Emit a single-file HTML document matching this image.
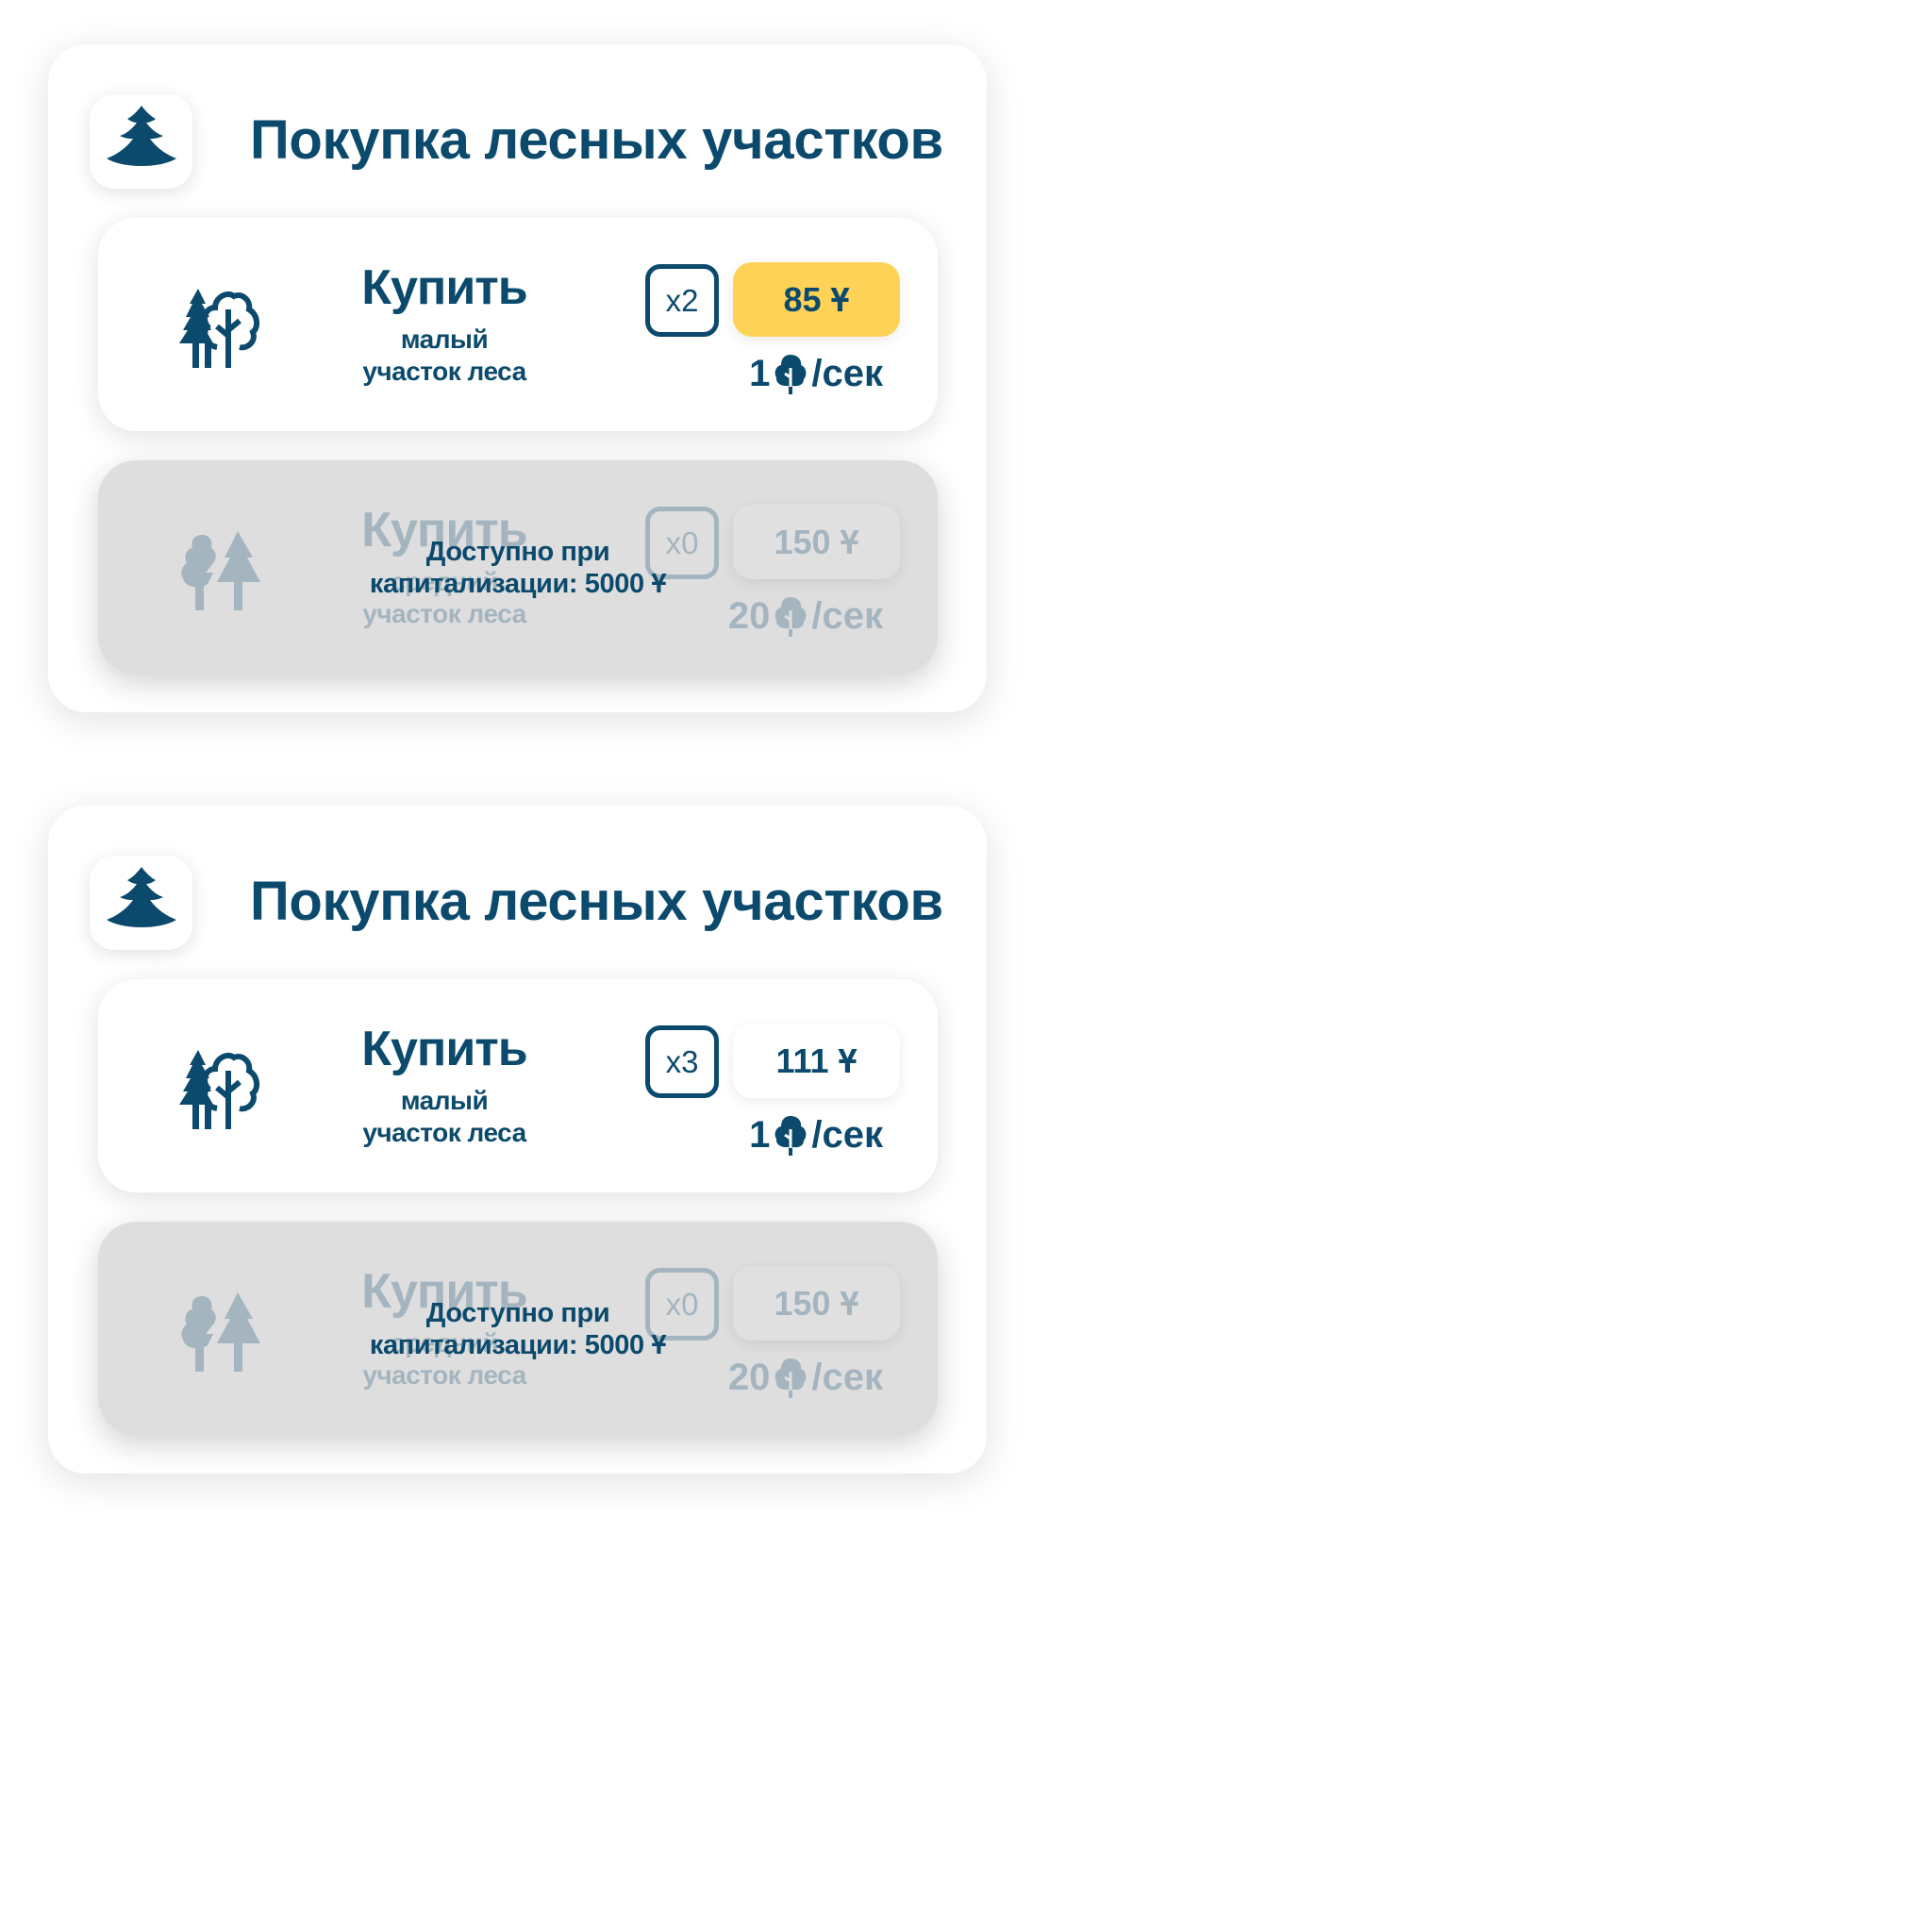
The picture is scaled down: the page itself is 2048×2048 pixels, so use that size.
<!DOCTYPE html>
<html><head><meta charset="utf-8"><style>
*{margin:0;padding:0;box-sizing:border-box}
body{width:2048px;height:2048px;background:#fff;font-family:"Liberation Sans","DejaVu Sans",sans-serif;color:#0b4a6d;position:relative;overflow:hidden}
.outer{position:absolute;left:51px;width:995px;height:708px;background:#fff;border-radius:40px;box-shadow:0 8px 40px rgba(0,0,0,.12)}
.ib{position:absolute;left:44px;top:53px;width:109px;height:100px;background:#fff;border-radius:26px;box-shadow:0 4px 18px rgba(0,0,0,.12)}
.title{position:absolute;left:214px;top:68px;font-size:58px;font-weight:bold;letter-spacing:-0.3px;white-space:nowrap}
.card{position:absolute;left:53px;width:890px;height:226px;border-radius:40px;background:#fff;box-shadow:0 6px 28px rgba(0,0,0,.12)}
.card.dis{background:#dedede;color:#a4b5bf;box-shadow:0 10px 32px rgba(0,0,0,.18)}
.buy{position:absolute;left:267px;width:200px;text-align:center;top:44px;font-size:52px;font-weight:bold;letter-spacing:-1px;line-height:60px}
.sub{position:absolute;left:217px;width:300px;text-align:center;top:112px;font-size:28px;font-weight:bold;line-height:34px;letter-spacing:-.5px}
.mx{position:absolute;left:580px;top:49px;width:78px;height:77px;border:5px solid currentColor;border-radius:16px;font-size:33px;text-align:center;line-height:67px}
.price{position:absolute;left:673px;top:47px;width:177px;height:79px;border-radius:20px;font-size:36px;font-weight:bold;text-align:center;line-height:79px;box-shadow:0 4px 14px rgba(0,0,0,.08)}
.rate{position:absolute;right:58px;top:143px;font-size:40px;font-weight:bold;white-space:nowrap;display:flex;align-items:center;gap:4px}
.ov{position:absolute;left:265px;width:360px;top:80px;text-align:center;font-size:29px;font-weight:bold;line-height:34px;color:#0b4a6d;letter-spacing:-.4px;white-space:nowrap}
.ico{position:absolute;left:86px;top:75px}
</style></head><body>

<div class="outer" style="top:47px">
 <div class="ib"><svg style="position:absolute;left:16px;top:12px" width="78" height="76" viewBox="0 0 78 76"><path fill="#0b4a6d" d="M39 0 C45 8 50 12 54 14 C50 17 46 18 44 18 C50 26 56 30 62 32 C56 35 51 35 48 35 C56 46 66 52 76 56 C66 62 52 64 39 64 C26 64 12 62 2 56 C12 52 22 46 30 35 C27 35 22 35 16 32 C22 30 28 26 34 18 C32 18 28 17 24 14 C28 12 33 8 39 0Z"/></svg></div>
 <div class="title">Покупка лесных участков</div>
 <div class="card" style="top:184px">
  <svg class="ico" width="88" height="84" viewBox="0 0 88 84"><path fill="#0b4a6d" d="M20 0 L28 16 L24 16 L32 30 L27 30 L34 44 L28 44 L36 58 L26 58 L0 58 L9 44 L4 44 L12 30 L7 30 L14 16 L11 16Z"/><rect x="14" y="56" width="7" height="28" fill="#0b4a6d"/><rect x="27" y="56" width="7" height="28" fill="#0b4a6d"/><path fill="none" stroke="#0b4a6d" stroke-width="6" d="M40 62 C28 60 24 48 30 40 C24 32 28 20 38 20 C38 10 50 2 58 8 C66 4 76 12 74 22 C84 28 84 42 78 46 C82 56 72 64 64 62"/><path fill="none" stroke="#0b4a6d" stroke-width="6" d="M52 22 V84 M52 50 L40 40 M52 44 L64 34"/></svg>
  <div class="buy">Купить</div>
  <div class="sub">малый<br>участок леса</div>
  <div class="mx">x2</div>
  <div class="price" style="background:#fdd257">85 Ұ</div>
  <div class="rate">1 <svg width="36" height="42" viewBox="0 0 36 42"><path fill="#0b4a6d" d="M18 0 C26 0 30 6 29 11 C35 13 36 22 32 26 C32 32 26 34 20 33 L20 42 L16 42 L16 33 C8 34 2 30 3 24 C0 20 2 12 8 11 C8 4 12 0 18 0Z"/><path stroke="#fff" stroke-width="3" fill="none" d="M18 14 V34 M18 24 L12 20"/></svg>/сек</div>
 </div>
 <div class="card dis" style="top:441px">
  <svg class="ico" width="88" height="84" viewBox="0 0 88 84"><path fill="#a4b5bf" d="M24 4 C32 4 36 10 34 18 C40 22 40 30 36 34 L28 44 L36 44 L30 56 C22 62 6 60 4 50 C0 44 4 36 8 34 C4 28 8 18 14 18 C12 10 16 4 24 4Z"/><rect x="17" y="50" width="9" height="34" fill="#a4b5bf"/><path fill="#a4b5bf" d="M62 0 L78 28 L72 28 L86 54 L40 54 L54 28 L48 28Z"/><rect x="58" y="52" width="9" height="32" fill="#a4b5bf"/></svg>
  <div class="buy">Купить</div>
  <div class="sub">средний<br>участок леса</div>
  <div class="mx">x0</div>
  <div class="price" style="background:#e0e0e0">150 Ұ</div>
  <div class="rate">20 <svg width="36" height="42" viewBox="0 0 36 42"><path fill="#a4b5bf" d="M18 0 C26 0 30 6 29 11 C35 13 36 22 32 26 C32 32 26 34 20 33 L20 42 L16 42 L16 33 C8 34 2 30 3 24 C0 20 2 12 8 11 C8 4 12 0 18 0Z"/><path stroke="#dedede" stroke-width="3" fill="none" d="M18 14 V34 M18 24 L12 20"/></svg>/сек</div>
  <div class="ov">Доступно при<br>капитализации: 5000 Ұ</div>
 </div>
</div>

<div class="outer" style="top:854px">
 <div class="ib"><svg style="position:absolute;left:16px;top:12px" width="78" height="76" viewBox="0 0 78 76"><path fill="#0b4a6d" d="M39 0 C45 8 50 12 54 14 C50 17 46 18 44 18 C50 26 56 30 62 32 C56 35 51 35 48 35 C56 46 66 52 76 56 C66 62 52 64 39 64 C26 64 12 62 2 56 C12 52 22 46 30 35 C27 35 22 35 16 32 C22 30 28 26 34 18 C32 18 28 17 24 14 C28 12 33 8 39 0Z"/></svg></div>
 <div class="title">Покупка лесных участков</div>
 <div class="card" style="top:184px">
  <svg class="ico" width="88" height="84" viewBox="0 0 88 84"><path fill="#0b4a6d" d="M20 0 L28 16 L24 16 L32 30 L27 30 L34 44 L28 44 L36 58 L26 58 L0 58 L9 44 L4 44 L12 30 L7 30 L14 16 L11 16Z"/><rect x="14" y="56" width="7" height="28" fill="#0b4a6d"/><rect x="27" y="56" width="7" height="28" fill="#0b4a6d"/><path fill="none" stroke="#0b4a6d" stroke-width="6" d="M40 62 C28 60 24 48 30 40 C24 32 28 20 38 20 C38 10 50 2 58 8 C66 4 76 12 74 22 C84 28 84 42 78 46 C82 56 72 64 64 62"/><path fill="none" stroke="#0b4a6d" stroke-width="6" d="M52 22 V84 M52 50 L40 40 M52 44 L64 34"/></svg>
  <div class="buy">Купить</div>
  <div class="sub">малый<br>участок леса</div>
  <div class="mx">x3</div>
  <div class="price" style="background:#fff">111 Ұ</div>
  <div class="rate">1 <svg width="36" height="42" viewBox="0 0 36 42"><path fill="#0b4a6d" d="M18 0 C26 0 30 6 29 11 C35 13 36 22 32 26 C32 32 26 34 20 33 L20 42 L16 42 L16 33 C8 34 2 30 3 24 C0 20 2 12 8 11 C8 4 12 0 18 0Z"/><path stroke="#fff" stroke-width="3" fill="none" d="M18 14 V34 M18 24 L12 20"/></svg>/сек</div>
 </div>
 <div class="card dis" style="top:441px">
  <svg class="ico" width="88" height="84" viewBox="0 0 88 84"><path fill="#a4b5bf" d="M24 4 C32 4 36 10 34 18 C40 22 40 30 36 34 L28 44 L36 44 L30 56 C22 62 6 60 4 50 C0 44 4 36 8 34 C4 28 8 18 14 18 C12 10 16 4 24 4Z"/><rect x="17" y="50" width="9" height="34" fill="#a4b5bf"/><path fill="#a4b5bf" d="M62 0 L78 28 L72 28 L86 54 L40 54 L54 28 L48 28Z"/><rect x="58" y="52" width="9" height="32" fill="#a4b5bf"/></svg>
  <div class="buy">Купить</div>
  <div class="sub">средний<br>участок леса</div>
  <div class="mx">x0</div>
  <div class="price" style="background:#e0e0e0">150 Ұ</div>
  <div class="rate">20 <svg width="36" height="42" viewBox="0 0 36 42"><path fill="#a4b5bf" d="M18 0 C26 0 30 6 29 11 C35 13 36 22 32 26 C32 32 26 34 20 33 L20 42 L16 42 L16 33 C8 34 2 30 3 24 C0 20 2 12 8 11 C8 4 12 0 18 0Z"/><path stroke="#dedede" stroke-width="3" fill="none" d="M18 14 V34 M18 24 L12 20"/></svg>/сек</div>
  <div class="ov">Доступно при<br>капитализации: 5000 Ұ</div>
 </div>
</div>

</body></html>
